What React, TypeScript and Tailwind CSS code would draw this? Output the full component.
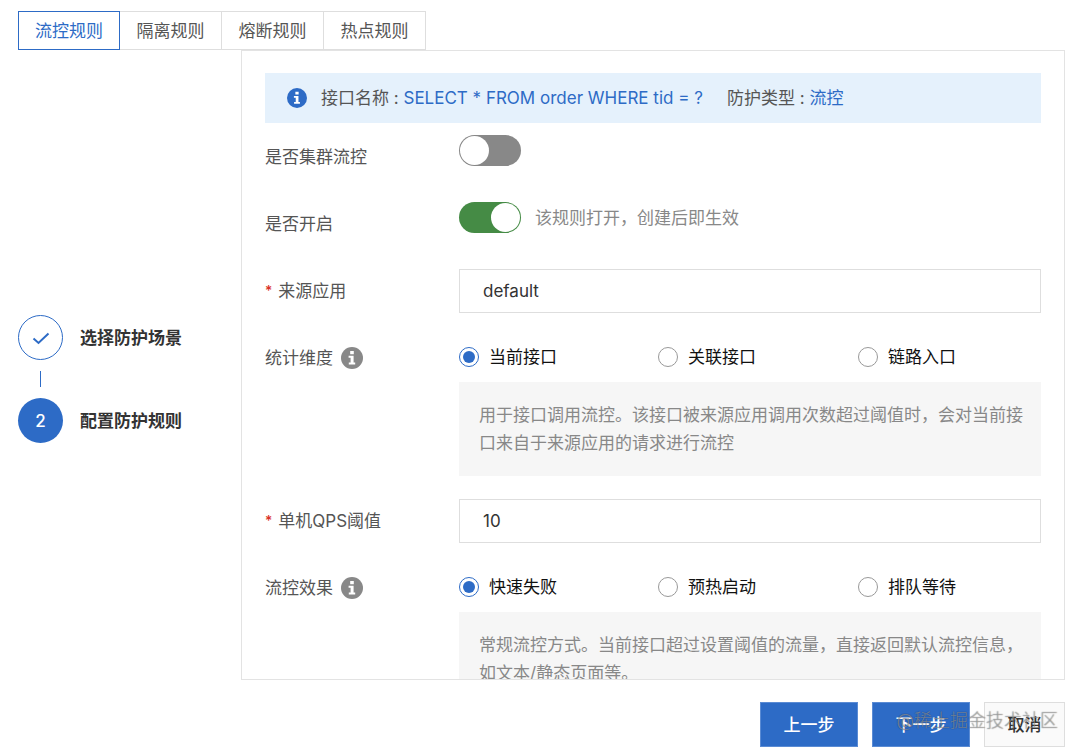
import { useState } from 'react';
import type { ReactNode } from 'react';

const tabs = ['流控规则', '隔离规则', '熔断规则', '热点规则'];

const dimensions = ['当前接口', '关联接口', '链路入口'];
const effects = ['快速失败', '预热启动', '排队等待'];

function InfoIcon({ className }: { className: string }) {
    return (
        <svg viewBox="0 0 22 22" className={className} aria-hidden="true">
            <circle cx="11" cy="11" r="11" fill="currentColor" />
            <path d="M9.2 4h3.6v3.2H9.2z M7.6 8.8h5v6.6h1.6v2H7.8v-2h1.8v-4.6h-2z" fill="#fff" />
        </svg>
    );
}

function FormRow({
    label,
    htmlFor,
    required,
    info,
    children,
}: {
    label: string;
    htmlFor?: string;
    required?: boolean;
    info?: boolean;
    children: ReactNode;
}) {
    return (
        <div className="flex items-start">
            <div className="flex h-11 w-[194px] shrink-0 items-center">
                {required && <span className="mr-1.5 text-sm font-medium text-[#d93026]">*</span>}
                <label htmlFor={htmlFor} className="text-[#555]">{label}</label>
                {info && <InfoIcon className="ml-2 size-[22px] text-[#888]" />}
            </div>
            <div className="min-w-0 flex-1">{children}</div>
        </div>
    );
}

function Switch({ id, defaultChecked }: { id: string; defaultChecked?: boolean }) {
    return (
        <input
            id={id}
            type="checkbox"
            role="switch"
            defaultChecked={defaultChecked}
            className="h-[31px] w-[62px] shrink-0 cursor-pointer appearance-none rounded-full bg-[#888] p-px before:block before:size-[29px] before:rounded-full before:bg-white checked:bg-[#458b45] checked:before:ml-[31px]"
        />
    );
}

function RadioGroup({ name, label, options }: { name: string; label: string; options: string[] }) {
    return (
        <div role="radiogroup" aria-label={label} className="grid h-[42px] grid-cols-[199px_200px_1fr] items-center">
            {options.map((option, i) => (
                <label key={option} className="flex items-center gap-2.5 text-[#111]">
                    <input
                        type="radio"
                        name={name}
                        defaultChecked={i === 0}
                        className="flex size-5 appearance-none items-center justify-center rounded-full border border-[#999] bg-white checked:border-[#2d6bc6] checked:before:block checked:before:size-3 checked:before:rounded-full checked:before:bg-[#2d6bc6]"
                    />
                    {option}
                </label>
            ))}
        </div>
    );
}

function Hint({ children }: { children: ReactNode }) {
    return (
        <p className="mt-1 bg-[#f6f6f6] py-[19px] pr-4 pl-5 leading-7 text-[#888]">{children}</p>
    );
}

export default function App() {
    const [activeTab, setActiveTab] = useState(0);

    return (
        <div className="relative flex h-screen flex-col bg-white pt-[11px] pr-[15px] pb-1.5 pl-[18px] font-['Inter','Noto_Sans_CJK_SC',sans-serif] text-[17px] leading-6 text-[#333]">
            {/* Tabs */}
            <nav className="flex">
                {tabs.map((tab, i) => (
                    <button
                        key={tab}
                        type="button"
                        onClick={() => setActiveTab(i)}
                        className={`h-[39px] w-[102px] border ${i === activeTab
                            ? 'border-[#2d6bc6] text-[#2d6bc6]'
                            : 'border-l-0 border-[#dedede] text-[#555]'}`}
                    >
                        {tab}
                    </button>
                ))}
            </nav>

            <div className="flex min-h-0 flex-1">
                {/* Steps */}
                <ol className="flex w-[223px] shrink-0 flex-col justify-center pt-7 font-bold">
                    <li className="flex items-center gap-[17px]">
                        <span className="flex size-[45px] items-center justify-center rounded-full border border-[#2d6bc6] text-[#2d6bc6]">
                            <svg viewBox="0 0 18 14" className="h-3.5 w-[18px]" fill="none" stroke="currentColor" strokeWidth="2">
                                <path d="M1.5 7.5 L6.5 12 L16.5 2.5" />
                            </svg>
                        </span>
                        选择防护场景
                    </li>
                    <li aria-hidden="true" className="my-[11px] ml-[22px] h-4 w-px bg-[#2d6bc6]" />
                    <li className="flex items-center gap-[17px]">
                        <span className="flex size-[45px] items-center justify-center rounded-full bg-[#2d6bc6] font-medium text-white">2</span>
                        配置防护规则
                    </li>
                </ol>

                {/* Rule form */}
                <form id="rule-form" className="min-w-0 flex-1 overflow-y-auto border border-[#e3e3e3] px-[23px] pt-[22px] [scrollbar-width:none]">
                    <div className="mb-3 flex h-[50px] items-center bg-[#e5f1fc] pl-[22px] text-[#555]">
                        <InfoIcon className="mr-3.5 size-5 text-[#2d6bc6]" />
                        <span>接口名称 : <span className="text-[#2d6bc6]">SELECT * FROM order WHERE tid = ?</span></span>
                        <span className="ml-6">防护类型 : <span className="text-[#2d6bc6]">流控</span></span>
                    </div>

                    <div className="flex flex-col gap-[23px]">
                        <FormRow label="是否集群流控" htmlFor="cluster">
                            <div className="flex"><Switch id="cluster" /></div>
                        </FormRow>
                        <FormRow label="是否开启" htmlFor="enabled">
                            <div className="flex items-center gap-3.5">
                                <Switch id="enabled" defaultChecked />
                                <span className="text-[#888]">该规则打开，创建后即生效</span>
                            </div>
                        </FormRow>
                        <FormRow label="来源应用" htmlFor="origin" required>
                            <input id="origin" defaultValue="default" className="h-11 w-full border border-[#dedede] px-[23px] text-[#333] outline-none" />
                        </FormRow>
                        <FormRow label="统计维度" info>
                            <RadioGroup name="dimension" label="统计维度" options={dimensions} />
                            <Hint>用于接口调用流控。该接口被来源应用调用次数超过阈值时，会对当前接口来自于来源应用的请求进行流控</Hint>
                        </FormRow>
                        <FormRow label="单机QPS阈值" htmlFor="qps" required>
                            <input id="qps" defaultValue="10" className="h-11 w-full border border-[#dedede] px-[23px] text-[#333] outline-none" />
                        </FormRow>
                        <FormRow label="流控效果" info>
                            <RadioGroup name="effect" label="流控效果" options={effects} />
                            <Hint>常规流控方式。当前接口超过设置阈值的流量，直接返回默认流控信息，如文本/静态页面等。</Hint>
                        </FormRow>
                    </div>
                </form>
            </div>

            {/* Actions */}
            <div className="mt-[22px] flex justify-end gap-3.5 font-medium">
                <button type="button" className="h-[45px] w-[98px] border border-[#5a8bd4] bg-[#2d6bc6] text-white">上一步</button>
                <button type="submit" form="rule-form" className="h-[45px] w-[98px] border border-[#5a8bd4] bg-[#2d6bc6] text-white">下一步</button>
                <button type="button" className="h-[45px] w-[81px] border border-[#dedede] bg-[#fafafa] text-[#333]">取消</button>
            </div>

            {/* Watermark */}
            <span className="pointer-events-none absolute right-[22px] bottom-5 text-lg leading-6 font-light text-white/40 [text-shadow:0_0_1px_rgba(0,0,0,0.7)]">
                @稀土掘金技术社区
            </span>
        </div>
    );
}
